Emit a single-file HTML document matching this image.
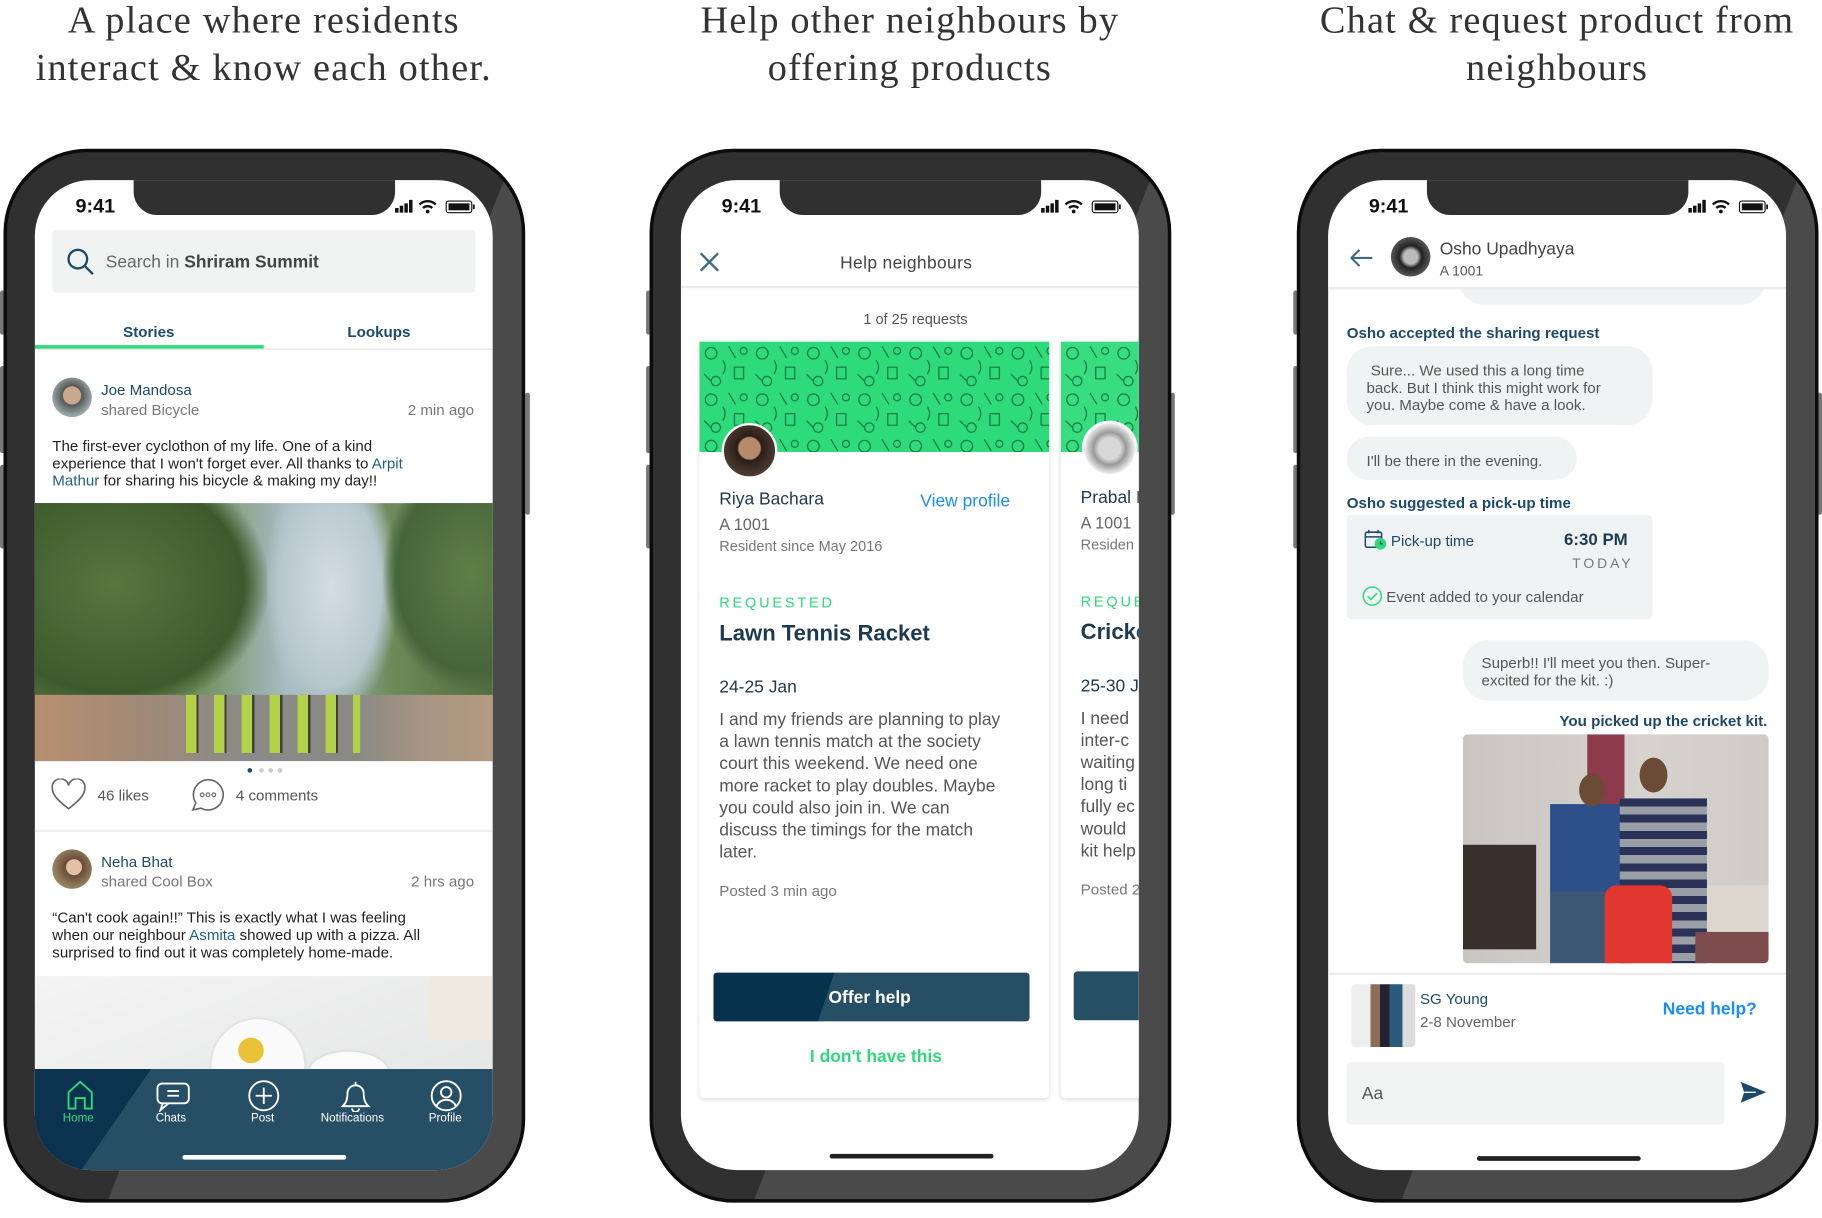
<!DOCTYPE html>
<html><head><meta charset="utf-8">
<style>
*{margin:0;padding:0;box-sizing:border-box}
html,body{width:1822px;height:1218px;background:#fff;overflow:hidden}
#c{position:absolute;left:0;top:0;width:1568px;height:1048px;transform:scale(1.16199);transform-origin:0 0;font-family:"Liberation Sans",sans-serif}
.h{position:absolute;top:-2px;width:560px;text-align:center;font-family:"Liberation Serif",serif;font-size:33px;line-height:41px;color:#333;letter-spacing:1px}
.phone{position:absolute;top:128px;width:449px;height:907px;border:3px solid #0c0c0c;border-radius:72px;background:#303030;overflow:hidden}
.phone .lt{position:absolute;inset:0;background:#4a4a4b;clip-path:polygon(437px 0,449px 0,449px 907px,85px 907px)}
.btn{position:absolute;width:4px;background:#777;border-radius:2px}
.scr{position:absolute;top:155px;width:394px;height:852px;background:#fff;border-radius:48px;overflow:hidden}
.a{position:absolute;white-space:nowrap}
.notch{position:absolute;left:85px;top:-2px;width:225px;height:32px;background:#303030;border-radius:0 0 20px 20px}
.time{position:absolute;left:35px;top:13px;font-size:17px;font-weight:600;color:#111}
.st{position:absolute;left:308px;top:16px}
.navy{color:#1d4a6b}
.gr{color:#777}
</style></head><body><div id="c">

<div class="h" style="left:-53px">A place where residents<br>interact &amp; know each other.</div>
<div class="h" style="left:503px">Help other neighbours by<br>offering products</div>
<div class="h" style="left:1060px">Chat &amp; request product from<br>neighbours</div>

<div class="btn" style="left:0;top:250px;height:38px"></div>
<div class="btn" style="left:0;top:315px;height:75px"></div>
<div class="btn" style="left:0;top:400px;height:72px"></div>
<div class="btn" style="left:452px;top:338px;height:105px"></div>
<div class="btn" style="left:556px;top:250px;height:38px"></div>
<div class="btn" style="left:556px;top:315px;height:75px"></div>
<div class="btn" style="left:556px;top:400px;height:72px"></div>
<div class="btn" style="left:1007px;top:338px;height:105px"></div>
<div class="btn" style="left:1113px;top:250px;height:38px"></div>
<div class="btn" style="left:1113px;top:315px;height:75px"></div>
<div class="btn" style="left:1113px;top:400px;height:72px"></div>
<div class="btn" style="left:1564px;top:338px;height:105px"></div>

<div class="phone" style="left:3px"><div class="lt"></div></div>
<div class="phone" style="left:559px"><div class="lt"></div></div>
<div class="phone" style="left:1116px"><div class="lt"></div></div>

<!-- PHONE 1 -->
<div class="scr" style="left:30px">
  <div class="time">9:41</div>
  <svg class="st" width="74" height="14" viewBox="0 0 74 14"><rect x="2" y="8" width="3" height="4" fill="#111"/><rect x="6" y="6" width="3" height="6" fill="#111"/><rect x="10" y="4" width="3" height="8" fill="#111"/><rect x="14" y="1" width="3" height="11" fill="#111"/><path d="M23 5a10 10 0 0 1 14 0M26 8a6 6 0 0 1 8 0" stroke="#111" stroke-width="2" fill="none"/><circle cx="30" cy="11" r="1.6" fill="#111"/><rect x="46" y="2" width="22" height="10" rx="2" fill="none" stroke="#111" stroke-width="1"/><rect x="48" y="4" width="18" height="6" fill="#111"/><rect x="69" y="5" width="1.5" height="4" fill="#111"/></svg>
  <div class="notch"></div>
  <div class="a" style="left:15px;top:43px;width:364px;height:54px;background:#f1f3f3;border-radius:4px"></div>
  <svg class="a" style="left:27px;top:58px" width="26" height="26" viewBox="0 0 26 26"><circle cx="10" cy="10" r="8" stroke="#1d4a6b" stroke-width="2" fill="none"/><path d="M16 16l7 7" stroke="#1d4a6b" stroke-width="2"/></svg>
  <div class="a" style="left:61px;top:62px;font-size:15px;color:#666">Search in <b style="color:#444">Shriram Summit</b></div>
  <div class="a navy" style="left:76px;top:123px;font-size:13px;font-weight:bold">Stories</div>
  <div class="a navy" style="left:269px;top:123px;font-size:13px;font-weight:bold">Lookups</div>
  <div class="a" style="left:0;top:145px;width:394px;height:1px;background:#e4e4e4"></div>
  <div class="a" style="left:0;top:142px;width:197px;height:3px;background:#2edb7a"></div>
  <div class="a" style="left:15px;top:170px;width:34px;height:34px;border-radius:50%;background:radial-gradient(circle at 50% 45%,#c9a88d 0 30%,#555 32%,#9aa 70%)"></div>
  <div class="a navy" style="left:57px;top:173px;font-size:13px">Joe Mandosa</div>
  <div class="a gr" style="left:57px;top:190px;font-size:13px">shared Bicycle</div>
  <div class="a gr" style="right:16px;top:190px;font-size:13px">2 min ago</div>
  <div class="a" style="left:15px;top:221px;font-size:13px;line-height:15px;color:#222">The first-ever cyclothon of my life. One of a kind<br>experience that I won't forget ever. All thanks to <span style="color:#1f5f8b">Arpit</span><br><span style="color:#1f5f8b">Mathur</span> for sharing his bicycle &amp; making my day!!</div>
  <div class="a" style="left:0;top:278px;width:394px;height:222px;overflow:hidden;background:linear-gradient(90deg,#4d6b3a,#6f8f5a 35%,#a9bbc4 55%,#9fb5b8 62%,#6e8a5a 78%,#506d3e)">
    <div style="position:absolute;left:200px;top:0;width:110px;height:180px;background:radial-gradient(ellipse at 50% 40%,#d3dde3,#b8c8cf 55%,transparent 75%)"></div>
    <div style="position:absolute;left:-40px;top:-20px;width:240px;height:200px;background:radial-gradient(ellipse at 45% 45%,#58763f,#3d5a2c 60%,transparent 72%)"></div>
    <div style="position:absolute;left:300px;top:-20px;width:150px;height:180px;background:radial-gradient(ellipse at 50% 45%,#5f7f48,#46653a 60%,transparent 72%)"></div>
    <div style="position:absolute;left:0;top:165px;width:394px;height:57px;background:linear-gradient(90deg,#b98f6e,#9e8a78 25%,#8b8a88 45%,#8a8985 70%,#a79584 85%,#b49a80)"></div>
    <div style="position:absolute;left:130px;top:165px;width:150px;height:50px;background:repeating-linear-gradient(90deg,#b9df3c 0 9px,#333 9px 11px,transparent 11px 24px);opacity:.85"></div>
  </div>
  <div class="a" style="left:183px;top:506px;width:4px;height:4px;border-radius:50%;background:#1d4a6b"></div>
  <div class="a" style="left:193px;top:506px;width:4px;height:4px;border-radius:50%;background:#ccc"></div>
  <div class="a" style="left:201px;top:506px;width:4px;height:4px;border-radius:50%;background:#ccc"></div>
  <div class="a" style="left:209px;top:506px;width:4px;height:4px;border-radius:50%;background:#ccc"></div>
  <svg class="a" style="left:14px;top:515px" width="30" height="28" viewBox="0 0 30 28"><path d="M15 26C6 19 1 14 1 8.5A6.8 6.8 0 0 1 15 6a6.8 6.8 0 0 1 14 2.5C29 14 24 19 15 26z" fill="none" stroke="#666" stroke-width="1.4"/></svg>
  <div class="a" style="left:54px;top:522px;font-size:13px;color:#555">46 likes</div>
  <svg class="a" style="left:134px;top:514px" width="30" height="30" viewBox="0 0 30 30"><path d="M15 2a13 13 0 1 1-6 24.5L2 28l2.5-6A13 13 0 0 1 15 2z" fill="none" stroke="#666" stroke-width="1.4"/><circle cx="10" cy="15" r="1.6" fill="none" stroke="#666"/><circle cx="15" cy="15" r="1.6" fill="none" stroke="#666"/><circle cx="20" cy="15" r="1.6" fill="none" stroke="#666"/></svg>
  <div class="a" style="left:173px;top:522px;font-size:13px;color:#555">4 comments</div>
  <div class="a" style="left:0;top:559px;width:394px;height:2px;background:#efefef"></div>
  <div class="a" style="left:15px;top:576px;width:34px;height:34px;border-radius:50%;background:radial-gradient(circle at 55% 45%,#e2c0a6 0 25%,#6b4a36 27%,#8c7a5a 60%,#b5a27a)"></div>
  <div class="a navy" style="left:57px;top:579px;font-size:13px">Neha Bhat</div>
  <div class="a gr" style="left:57px;top:596px;font-size:13px">shared Cool Box</div>
  <div class="a gr" style="right:16px;top:596px;font-size:13px">2 hrs ago</div>
  <div class="a" style="left:15px;top:627px;font-size:13px;line-height:15px;color:#222">“Can't cook again!!” This is exactly what I was feeling<br>when our neighbour <span style="color:#1f5f8b">Asmita</span> showed up with a pizza. All<br>surprised to find out it was completely home-made.</div>
  <div class="a" style="left:0;top:685px;width:394px;height:80px;background:linear-gradient(160deg,#f4f4f4,#e6e7e7)"></div>
  <div class="a" style="left:152px;top:722px;width:80px;height:80px;border-radius:50%;background:#fafafa;box-shadow:0 0 3px #ccc"></div>
  <div class="a" style="left:175px;top:738px;width:22px;height:22px;border-radius:50%;background:#e9c23a"></div>
  <div class="a" style="left:235px;top:750px;width:70px;height:40px;border-radius:50%;background:#fbfbfb;box-shadow:0 0 3px #ccc"></div>
  <div class="a" style="left:340px;top:685px;width:54px;height:55px;background:#efe9e2"></div>
  <div class="a" style="left:0;top:765px;width:394px;height:87px;background:#264f66"></div>
  <div class="a" style="left:0;top:765px;width:100px;height:87px;background:#0b3350;clip-path:polygon(0 0,100px 0,40px 87px,0 87px)"></div>
  <svg class="a" style="left:27px;top:774px" width="24" height="26" viewBox="0 0 24 26"><path d="M2 25V11L12 2l10 9v14h-6v-9H8v9z" fill="none" stroke="#2edb7a" stroke-width="1.6"/></svg>
  <div class="a" style="left:24px;top:802px;font-size:10px;color:#2edb7a">Home</div>
  <svg class="a" style="left:104px;top:776px" width="30" height="26" viewBox="0 0 30 26"><rect x="1.5" y="1.5" width="27" height="17" rx="4" fill="none" stroke="#fff" stroke-width="1.6"/><path d="M6 18.5l-2 6 7-6M10 8h10M10 12h10" stroke="#fff" stroke-width="1.6" fill="none"/></svg>
  <div class="a" style="left:104px;top:802px;font-size:10px;color:#fff">Chats</div>
  <svg class="a" style="left:183px;top:774px" width="28" height="28" viewBox="0 0 28 28"><circle cx="14" cy="14" r="12.5" fill="none" stroke="#fff" stroke-width="1.6"/><path d="M14 7v14M7 14h14" stroke="#fff" stroke-width="1.6"/></svg>
  <div class="a" style="left:186px;top:802px;font-size:10px;color:#fff">Post</div>
  <svg class="a" style="left:262px;top:774px" width="28" height="28" viewBox="0 0 28 28"><path d="M3 23h22c-3-3-4-6-4-11a7 7 0 0 0-14 0c0 5-1 8-4 11zM11 25a3 3 0 0 0 6 0M14 2v3" fill="none" stroke="#fff" stroke-width="1.6"/></svg>
  <div class="a" style="left:246px;top:802px;font-size:10px;color:#fff">Notifications</div>
  <svg class="a" style="left:340px;top:774px" width="28" height="28" viewBox="0 0 28 28"><circle cx="14" cy="14" r="12.5" fill="none" stroke="#fff" stroke-width="1.6"/><circle cx="14" cy="11" r="4.5" fill="none" stroke="#fff" stroke-width="1.6"/><path d="M5.5 23c2-4 5-5.5 8.5-5.5s6.5 1.5 8.5 5.5" fill="none" stroke="#fff" stroke-width="1.6"/></svg>
  <div class="a" style="left:339px;top:802px;font-size:10px;color:#fff">Profile</div>
  <div class="a" style="left:127px;top:839px;width:141px;height:4px;border-radius:2px;background:#fff"></div>
</div>

<!-- PHONE 2 -->
<div class="scr" style="left:586px">
  <div class="time">9:41</div>
  <svg class="st" width="74" height="14" viewBox="0 0 74 14"><rect x="2" y="8" width="3" height="4" fill="#111"/><rect x="6" y="6" width="3" height="6" fill="#111"/><rect x="10" y="4" width="3" height="8" fill="#111"/><rect x="14" y="1" width="3" height="11" fill="#111"/><path d="M23 5a10 10 0 0 1 14 0M26 8a6 6 0 0 1 8 0" stroke="#111" stroke-width="2" fill="none"/><circle cx="30" cy="11" r="1.6" fill="#111"/><rect x="46" y="2" width="22" height="10" rx="2" fill="none" stroke="#111" stroke-width="1"/><rect x="48" y="4" width="18" height="6" fill="#111"/><rect x="69" y="5" width="1.5" height="4" fill="#111"/></svg>
  <div class="notch"></div>
  <svg class="a" style="left:16px;top:62px" width="17" height="17" viewBox="0 0 17 17"><path d="M1 1l15 15M16 1L1 16" stroke="#3e6a85" stroke-width="2"/></svg>
  <div class="a" style="left:137px;top:63px;font-size:15px;color:#444;letter-spacing:.3px">Help neighbours</div>
  <div class="a" style="left:0;top:91px;width:394px;height:2px;background:#ececec"></div>
  <div class="a" style="left:157px;top:113px;font-size:12.5px;color:#555">1 of 25 requests</div>
  <svg width="0" height="0" style="position:absolute"><defs><pattern id="pt" width="44" height="40" patternUnits="userSpaceOnUse"><circle cx="10" cy="10" r="5" fill="none" stroke="#16713f" stroke-width="1"/><path d="M25 4l6 10M30 22h8v10h-8zM4 28l6 6M14 30a4 4 0 1 0 .1 0" fill="none" stroke="#16713f" stroke-width="1"/><circle cx="38" cy="8" r="3" fill="none" stroke="#16713f"/><path d="M20 16q4 6 0 12" fill="none" stroke="#16713f"/></pattern></defs></svg>
  <div class="a" style="left:16px;top:139px;width:301px;height:651px;background:#fff;border-radius:4px;box-shadow:0 1px 4px rgba(0,0,0,.15)"></div>
  <svg class="a" style="left:16px;top:139px" width="301" height="95"><rect width="301" height="95" fill="#2edb7a"/><rect width="301" height="95" fill="url(#pt)"/></svg>
  <div class="a" style="left:327px;top:139px;width:120px;height:651px;background:#fff;border-radius:4px;box-shadow:0 1px 4px rgba(0,0,0,.15)"></div>
  <svg class="a" style="left:327px;top:139px" width="70" height="95"><rect width="70" height="95" fill="#38dd80"/><rect width="70" height="95" fill="url(#pt)"/></svg>
  <div class="a" style="left:35px;top:209px;width:48px;height:48px;border-radius:50%;border:2px solid #fff;background:radial-gradient(circle at 50% 45%,#b88a6c 0 28%,#2a1e1a 32%,#4a3a30 70%,#6d5a4e)"></div>
  <div class="a" style="left:345px;top:207px;width:48px;height:48px;border-radius:50%;border:2px solid #fff;background:radial-gradient(circle at 50% 50%,#d8d8d8 0 30%,#999 45%,#eee 70%)"></div>
  <div class="a" style="left:33px;top:266px;font-size:15px;color:#1d3a50">Riya Bachara</div>
  <div class="a" style="left:206px;top:268px;font-size:15px;color:#1a8cff">View profile</div>
  <div class="a" style="left:33px;top:288px;font-size:14px;color:#666">A 1001</div>
  <div class="a" style="left:33px;top:308px;font-size:12.5px;color:#777">Resident since May 2016</div>
  <div class="a" style="left:33px;top:357px;font-size:12.5px;color:#2edb7a;letter-spacing:2.4px">REQUESTED</div>
  <div class="a" style="left:33px;top:380px;font-size:19px;font-weight:bold;color:#1d3a50">Lawn Tennis Racket</div>
  <div class="a" style="left:33px;top:428px;font-size:15px;color:#1d3a50">24-25 Jan</div>
  <div class="a" style="left:33px;top:455px;font-size:15px;line-height:19px;color:#555">I and my friends are planning to play<br>a lawn tennis match at the society<br>court this weekend. We need one<br>more racket to play doubles. Maybe<br>you could also join in. We can<br>discuss the timings for the match<br>later.</div>
  <div class="a" style="left:33px;top:604px;font-size:13px;color:#777">Posted 3 min ago</div>
  <div class="a" style="left:28px;top:682px;width:272px;height:42px;border-radius:3px;background:#264f66;overflow:hidden"><div style="position:absolute;left:0;top:0;width:104px;height:42px;background:#06324d;clip-path:polygon(0 0,104px 0,90px 42px,0 42px)"></div></div>
  <div class="a" style="left:127px;top:695px;font-size:15px;font-weight:bold;color:#fff">Offer help</div>
  <div class="a" style="left:111px;top:746px;font-size:15px;font-weight:bold;color:#2edb7a">I don't have this</div>
  <div class="a" style="left:344px;top:265px;font-size:15px;color:#1d3a50">Prabal I</div>
  <div class="a" style="left:344px;top:287px;font-size:14px;color:#666">A 1001</div>
  <div class="a" style="left:344px;top:307px;font-size:12.5px;color:#777">Residen</div>
  <div class="a" style="left:344px;top:356px;font-size:12.5px;color:#2edb7a;letter-spacing:2.4px">REQUE</div>
  <div class="a" style="left:344px;top:379px;font-size:19px;font-weight:bold;color:#1d3a50">Cricke</div>
  <div class="a" style="left:344px;top:427px;font-size:15px;color:#1d3a50">25-30 J</div>
  <div class="a" style="left:344px;top:454px;font-size:15px;line-height:19px;color:#555">I need<br>inter-c<br>waiting<br>long ti<br>fully ec<br>would<br>kit help</div>
  <div class="a" style="left:344px;top:603px;font-size:13px;color:#777">Posted 2</div>
  <div class="a" style="left:338px;top:681px;width:80px;height:42px;border-radius:3px;background:#264f66"></div>
  <div class="a" style="left:128px;top:838px;width:141px;height:4px;border-radius:2px;background:#222"></div>
</div>

<!-- PHONE 3 -->
<div class="scr" style="left:1143px">
  <div class="time">9:41</div>
  <svg class="st" width="74" height="14" viewBox="0 0 74 14"><rect x="2" y="8" width="3" height="4" fill="#111"/><rect x="6" y="6" width="3" height="6" fill="#111"/><rect x="10" y="4" width="3" height="8" fill="#111"/><rect x="14" y="1" width="3" height="11" fill="#111"/><path d="M23 5a10 10 0 0 1 14 0M26 8a6 6 0 0 1 8 0" stroke="#111" stroke-width="2" fill="none"/><circle cx="30" cy="11" r="1.6" fill="#111"/><rect x="46" y="2" width="22" height="10" rx="2" fill="none" stroke="#111" stroke-width="1"/><rect x="48" y="4" width="18" height="6" fill="#111"/><rect x="69" y="5" width="1.5" height="4" fill="#111"/></svg>
  <div class="notch"></div>
  <div class="a" style="left:112px;top:60px;width:265px;height:47px;border-radius:22px;background:#f0f3f3"></div>
  <div class="a" style="left:0;top:40px;width:394px;height:52px;background:#fff"></div>
  <svg class="a" style="left:19px;top:59px" width="20" height="16" viewBox="0 0 20 16"><path d="M19 8H2M8 1L1 8l7 7" fill="none" stroke="#3e6a85" stroke-width="1.8"/></svg>
  <div class="a" style="left:54px;top:49px;width:34px;height:34px;border-radius:50%;background:radial-gradient(circle at 50% 50%,#bbb 0 25%,#222 40%,#555 70%,#999)"></div>
  <div class="a" style="left:96px;top:51px;font-size:15px;color:#444">Osho Upadhyaya</div>
  <div class="a" style="left:96px;top:71px;font-size:12px;color:#555">A 1001</div>
  <div class="a" style="left:0;top:92px;width:394px;height:2px;background:#ececec"></div>
  <div class="a navy" style="left:16px;top:124px;font-size:13px;font-weight:600">Osho accepted the sharing request</div>
  <div class="a" style="left:16px;top:143px;width:263px;height:68px;border-radius:22px;background:#f0f3f3"></div>
  <div class="a" style="left:33px;top:156px;font-size:13px;line-height:15px;color:#555">&nbsp;Sure... We used this a long time<br>back. But I think this might work for<br>you. Maybe come &amp; have a look.</div>
  <div class="a" style="left:16px;top:221px;width:198px;height:37px;border-radius:19px;background:#f0f3f3"></div>
  <div class="a" style="left:33px;top:234px;font-size:13px;color:#555">I'll be there in the evening.</div>
  <div class="a navy" style="left:16px;top:270px;font-size:13px;font-weight:600">Osho suggested a pick-up time</div>
  <div class="a" style="left:16px;top:288px;width:263px;height:90px;border-radius:4px;background:#f0f3f3"></div>
  <svg class="a" style="left:31px;top:300px" width="20" height="19" viewBox="0 0 20 19"><rect x="1" y="3" width="14" height="13" rx="1.5" fill="none" stroke="#1d4a6b" stroke-width="1.3"/><path d="M1 7h14M4 1v3M12 1v3" stroke="#1d4a6b" stroke-width="1.3"/><circle cx="14" cy="13" r="5" fill="#2edb7a"/><path d="M14 10.5V13h2" stroke="#1d4a6b" stroke-width="1.1" fill="none"/></svg>
  <div class="a navy" style="left:54px;top:303px;font-size:13px">Pick-up time</div>
  <div class="a" style="left:203px;top:302px;font-size:14.5px;font-weight:bold;color:#1d3a50">6:30 PM</div>
  <div class="a" style="left:210px;top:323px;font-size:12px;color:#777;letter-spacing:2.5px">TODAY</div>
  <svg class="a" style="left:29px;top:349px" width="18" height="18" viewBox="0 0 18 18"><circle cx="9" cy="9" r="7.8" fill="none" stroke="#2edb7a" stroke-width="1.3"/><path d="M5 9.2l2.8 2.8L13 6.5" fill="none" stroke="#2edb7a" stroke-width="1.3"/></svg>
  <div class="a" style="left:50px;top:351px;font-size:13px;color:#555">Event added to your calendar</div>
  <div class="a" style="left:116px;top:396px;width:263px;height:52px;border-radius:22px;background:#f0f3f3"></div>
  <div class="a" style="left:132px;top:408px;font-size:13px;line-height:15px;color:#555">Superb!! I'll meet you then. Super-<br>excited for the kit. :)</div>
  <div class="a navy" style="right:16px;top:458px;font-size:13px;font-weight:600">You picked up the cricket kit.</div>
  <div class="a" style="left:116px;top:477px;width:263px;height:197px;border-radius:4px;overflow:hidden;background:linear-gradient(90deg,#c9c6c2,#d6d3cf 60%,#cfcbc6)">
    <div style="position:absolute;left:0;top:95px;width:63px;height:90px;background:#3a302b"></div>
    <div style="position:absolute;left:107px;top:0;width:32px;height:70px;background:#8c3a4c"></div>
    <div style="position:absolute;left:75px;top:60px;width:70px;height:137px;background:linear-gradient(#2d4f8a 0 55%,#3d5777 55%)"></div>
    <div style="position:absolute;left:100px;top:34px;width:22px;height:28px;border-radius:50%;background:#6b4a36"></div>
    <div style="position:absolute;left:135px;top:55px;width:75px;height:142px;background:repeating-linear-gradient(#2a3357 0 7px,#9a9ea6 7px 14px)"></div>
    <div style="position:absolute;left:152px;top:20px;width:24px;height:30px;border-radius:50%;background:#6b4a36"></div>
    <div style="position:absolute;left:122px;top:130px;width:58px;height:67px;border-radius:10px 10px 0 0;background:#e2372e"></div>
    <div style="position:absolute;left:210px;top:130px;width:53px;height:40px;background:#ddd6cf"></div>
    <div style="position:absolute;left:200px;top:170px;width:63px;height:27px;background:#7d4c4c"></div>
  </div>
  <div class="a" style="left:0;top:682px;width:394px;height:2px;background:#ececec"></div>
  <div class="a" style="left:20px;top:692px;width:55px;height:54px;border-radius:3px;background:linear-gradient(90deg,#eee 0 30%,#8d6d55 30% 45%,#223 45% 60%,#2b5a7a 60% 80%,#ddd 80%)"></div>
  <div class="a navy" style="left:79px;top:697px;font-size:13px">SG Young</div>
  <div class="a" style="left:79px;top:717px;font-size:13px;color:#666">2-8 November</div>
  <div class="a" style="left:288px;top:705px;font-size:15px;font-weight:bold;color:#1a8cff">Need help?</div>
  <div class="a" style="left:16px;top:759px;width:325px;height:54px;border-radius:4px;background:#f2f4f4"></div>
  <div class="a" style="left:29px;top:778px;font-size:15px;color:#555">Aa</div>
  <svg class="a" style="left:354px;top:775px" width="24" height="20" viewBox="0 0 24 20"><path d="M1 1l22 9L1 19l3-9z" fill="#1d4a6b"/><path d="M4 10h10" stroke="#fff" stroke-width="1.2"/></svg>
  <div class="a" style="left:128px;top:840px;width:141px;height:4px;border-radius:2px;background:#222"></div>
</div>

</div></body></html>
